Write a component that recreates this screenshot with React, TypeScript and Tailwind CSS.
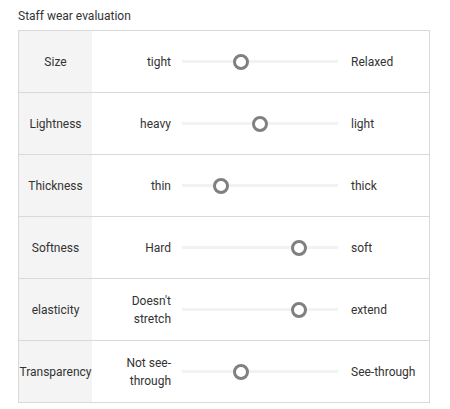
import React from 'react';

interface Row {
  label: string;
  left: string;
  right: string;
  value: number;
}

const rows: Row[] = [
  { label: 'Size', left: 'tight', right: 'Relaxed', value: 0.375 },
  { label: 'Lightness', left: 'heavy', right: 'light', value: 0.5 },
  { label: 'Thickness', left: 'thin', right: 'thick', value: 0.25 },
  { label: 'Softness', left: 'Hard', right: 'soft', value: 0.75 },
  { label: 'elasticity', left: "Doesn't stretch", right: 'extend', value: 0.75 },
  { label: 'Transparency', left: 'Not see-through', right: 'See-through', value: 0.375 },
];

export default function App() {
  return (
    <div
      className="min-h-screen bg-white pl-[18px] pt-[8px] text-[#333]"
      style={{ fontFamily: 'Roboto, "Noto Sans", sans-serif' }}
    >
      <h2 className="text-[12px] leading-[16px] mb-[6px]">Staff wear evaluation</h2>
      <div className="w-[412px] border border-[#d9d9d9]">
        {rows.map((row, i) => (
          <div
            key={row.label}
            className={`flex text-[12px] ${i < rows.length - 1 ? 'h-[62px] border-b border-[#d9d9d9]' : 'h-[61px]'}`}
          >
            <div className="w-[73px] shrink-0 bg-[#f4f4f4] flex items-center justify-center text-center">
              {row.label}
            </div>
            <div className="w-[90px] shrink-0 flex items-center justify-end text-right pl-[24px] pr-[11px] leading-[18px]">
              {row.left}
            </div>
            <div className="w-[156px] shrink-0 flex items-center">
              <div className="relative w-full h-[3px] bg-[#f2f2f2]">
                <div
                  className="absolute top-1/2 w-[16px] h-[16px] -translate-x-1/2 -translate-y-1/2 rounded-full border-[3px] border-[#808080] bg-white"
                  style={{ left: `${row.value * 100}%` }}
                />
              </div>
            </div>
            <div className="flex-1 flex items-center pl-[13px]">{row.right}</div>
          </div>
        ))}
      </div>
    </div>
  );
}
